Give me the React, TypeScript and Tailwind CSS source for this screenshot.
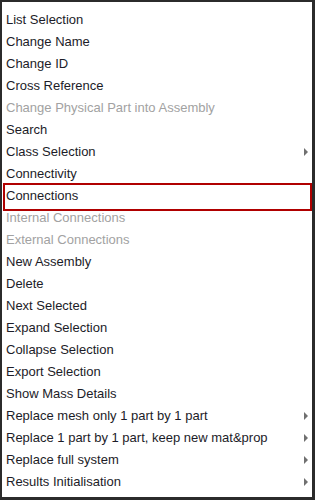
import React from "react";

type Item = { label: string; disabled?: boolean; sub?: boolean; selected?: boolean };

const items: Item[] = [
  { label: "List Selection" },
  { label: "Change Name" },
  { label: "Change ID" },
  { label: "Cross Reference" },
  { label: "Change Physical Part into Assembly", disabled: true },
  { label: "Search" },
  { label: "Class Selection", sub: true },
  { label: "Connectivity" },
  { label: "Connections", selected: true },
  { label: "Internal Connections", disabled: true },
  { label: "External Connections", disabled: true },
  { label: "New Assembly" },
  { label: "Delete" },
  { label: "Next Selected" },
  { label: "Expand Selection" },
  { label: "Collapse Selection" },
  { label: "Export Selection" },
  { label: "Show Mass Details" },
  { label: "Replace mesh only 1 part by 1 part", sub: true },
  { label: "Replace 1 part by 1 part, keep new mat&prop", sub: true },
  { label: "Replace full system", sub: true },
  { label: "Results Initialisation", sub: true },
];

export default function App() {
  return (
    <div
      className="w-[315px] h-[500px] bg-white border-[#2b2b2b] border-t-2 border-l-2 border-r-[3px] border-b-[3px] pt-[7px] box-border"
      style={{ fontFamily: '"Liberation Sans", Arial, sans-serif' }}
    >
      {items.map((it) => (
        <div key={it.label} className="relative h-[22px] flex items-center pl-[4px] pr-[4px] text-[13px]">
          <span className={it.disabled ? "text-[#a2a2a2]" : "text-[#1c1c28]"}>{it.label}</span>
          {it.sub && (
            <span className="ml-auto w-0 h-0 border-y-[4px] border-y-transparent border-l-[4px] border-l-[#707070]" />
          )}
          {it.selected && (
            <div className="absolute left-[1px] right-0 top-[-2px] bottom-[-4px] border-2 border-[#b00000] pointer-events-none" />
          )}
        </div>
      ))}
    </div>
  );
}
